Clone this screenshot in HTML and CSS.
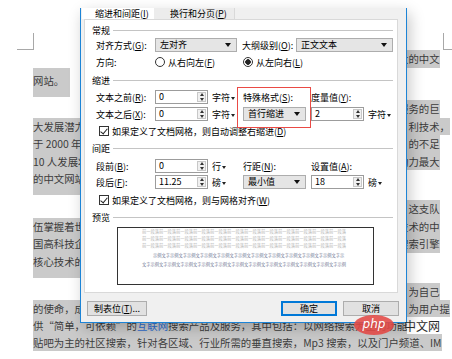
FILE: index.html
```html
<!DOCTYPE html>
<html lang="zh-CN">
<head>
    <meta charset="UTF-8">
    <meta name="viewport" content="width=device-width, initial-scale=1.0">
    <title>段落</title>
    <link rel="stylesheet" href="styles.css">
</head>
<body>
<div class="doc">
    <!-- page corner marks -->
    <div class="marks">
        <div class="mark-l"></div>
        <div class="mark-r"></div>
    </div>

    <!-- document text behind the dialog -->
    <div class="page">
        <div class="ln"><div class="l"></div><div class="r"><span class="hl">大的中文</span></div></div>
        <div class="ln ln-b"><div class="l"><span class="hl pad">网站。</span></div><div class="r"></div></div>
        <div class="gap3"></div>
        <div class="ln"><div class="l"></div><div class="r"><span class="hl">服务的巨</span></div></div>
        <div class="ln"><div class="l"><span class="hl">大发展潜力</span></div><div class="r"><span class="hl">　利技术，</span></div></div>
        <div class="ln"><div class="l"><span class="hl">于 2000 年1</span></div><div class="r"><span class="hl">　的不足</span></div></div>
        <div class="ln"><div class="l"><span class="hl">10 人发展壮</span></div><div class="r"><span class="hl">动力最大</span></div></div>
        <div class="ln ln-g"><div class="l"><span class="hl">的中文网站</span></div><div class="r"></div></div>
        <div class="gap5"></div>
        <div class="ln"><div class="l"></div><div class="r"><span class="hl">，这支队</span></div></div>
        <div class="ln"><div class="l"><span class="hl">伍掌握着世</span></div><div class="r"><span class="hl">技术的中</span></div></div>
        <div class="ln"><div class="l"><span class="hl">国高科技企</span></div><div class="r"><span class="hl">搜索引擎</span></div></div>
        <div class="ln ln-k"><div class="l"><span class="hl">核心技术的</span></div><div class="r"></div></div>
        <div class="gap5"></div>
        <div class="ln ln-s"><div class="l"></div><div class="r"><span class="hl">　为自己</span></div></div>
        <div class="ln ln-s"><div class="l"><span class="hl">的使命，成</span></div><div class="r"><span class="hl">　为用户提</span></div></div>
        <div class="ln ln-s"><div class="full"><span class="hl">供“简单，可依赖”的<span class="link">互联网</span>搜索产品及服务，其中包括：以网络搜索为主的功能</span></div></div>
        <div class="ln ln-s"><div class="full"><span class="hl">贴吧为主的社区搜索，针对各区域、行业所需的垂直搜索，Mp3 搜索，以及门户频道、IM</span></div></div>
    </div>

    <!-- paragraph dialog -->
    <div class="dialog">
        <div class="tabs">
            <div class="tab tab-active">缩进和间距(<u>I</u>)</div>
            <div class="tab tab-off">换行和分页(<u>P</u>)</div>
        </div>

        <div class="panel">
            <div class="group-title mt4">常规</div>
            <div class="row mt2">
                <span class="lbl">对齐方式(<u>G</u>):</span>
                <div class="combo combo-align">左对齐</div>
                <span class="lbl-outline">大纲级别(<u>O</u>):</span>
                <div class="combo combo-outline">正文文本</div>
            </div>
            <div class="row mt3">
                <span class="lbl">方向:</span>
                <div class="c2"><i class="radio"></i>从右向左(<u>F</u>)</div>
                <div class="c3"><i class="radio radio-on"></i>从左向右(<u>L</u>)</div>
            </div>

            <div class="group-title mt5">缩进</div>
            <div class="row mt4">
                <span class="lbl">文本之前(<u>R</u>):</span>
                <div class="c2"><div class="spin"><span class="val">0</span><span class="btns"></span></div><span class="unit">字符</span></div>
                <div class="c3">特殊格式(<u>S</u>):</div>
                <div class="c4">度量值(<u>Y</u>):</div>
            </div>
            <div class="row mt3">
                <span class="lbl">文本之后(<u>X</u>):</span>
                <div class="c2"><div class="spin"><span class="val">0</span><span class="btns"></span></div><span class="unit">字符</span></div>
                <div class="c3"><div class="combo combo-small">首行缩进</div></div>
                <div class="c4"><div class="spin"><span class="val">2</span><span class="btns"></span></div><span class="unit">字符</span></div>
            </div>
            <div class="check mt4"><i class="box"></i>如果定义了文档网格，则自动调整右缩进(<u>D</u>)</div>

            <div class="group-title mt5">间距</div>
            <div class="row mt5">
                <span class="lbl">段前(<u>B</u>):</span>
                <div class="c2"><div class="spin"><span class="val">0</span><span class="btns"></span></div><span class="unit">行</span></div>
                <div class="c3">行距(<u>N</u>):</div>
                <div class="c4">设置值(<u>A</u>):</div>
            </div>
            <div class="row mt2">
                <span class="lbl">段后(<u>F</u>):</span>
                <div class="c2"><div class="spin"><span class="val">11.25</span><span class="btns"></span></div><span class="unit">磅</span></div>
                <div class="c3"><div class="combo combo-small">最小值</div></div>
                <div class="c4"><div class="spin"><span class="val">18</span><span class="btns"></span></div><span class="unit">磅</span></div>
            </div>
            <div class="check mt5"><i class="box"></i>如果定义了文档网格，则与网格对齐(<u>W</u>)</div>

            <div class="group-title mt5">预览</div>
            <div class="preview">
                <div class="pv-prev">前一段落前一段落前一段落前一段落前一段落前一段落前一段落前一段落前一段落前一段落前一段落前一段落</div>
                <div class="pv-prev">前一段落前一段落前一段落前一段落前一段落前一段落前一段落前一段落前一段落前一段落前一段落前一段落</div>
                <div class="pv-prev">前一段落前一段落前一段落前一段落前一段落前一段落前一段落前一段落前一段落前一段落前一段落前一段落</div>
                <div class="pv-text pv-first">示例文字示例文字示例文字示例文字示例文字示例文字示例文字示例文字示例文字示例文字示例文字示</div>
                <div class="pv-text">文字示例文字示例文字示例文字示例文字示例文字示例文字示例文字示例文字示例文字示例文字示例文字示例</div>
            </div>
        </div>

        <div class="footer">
            <div class="btn btn-tabs">制表位(<u>T</u>)...</div>
            <div class="btn btn-ok">确定</div>
            <div class="btn btn-cancel">取消</div>
        </div>

        <!-- red annotation around the special indent -->
        <div class="note-box"></div>
    </div>

    <!-- site watermark -->
    <div class="watermark">
        <span class="wm-php">php</span>
        <span class="wm-cn">中文网</span>
    </div>
</div>
</body>
</html>
```

FILE: styles.css
```css
* {
    box-sizing: border-box;
}
body {
    margin: 0;
    width: 452px;
    height: 359px;
    overflow: hidden;
    background: #fff;
    font-family: "Noto Sans CJK SC", "Microsoft YaHei", sans-serif;
    color: #333;
}
u {
    text-decoration: underline;
    text-underline-offset: 1px;
}
.doc {
    position: relative;
    height: 359px;
    padding-top: 33px;
}

/* Page corner marks */
.marks {
    display: flex;
    justify-content: space-between;
    height: 17px;
}
.mark-l {
    width: 17px;
    margin-left: 17px;
    border-right: 1px solid #a8a8a8;
    border-bottom: 1px solid #a8a8a8;
}
.mark-r {
    width: 9px;
    border-left: 1px solid #a8a8a8;
    border-bottom: 1px solid #a8a8a8;
}

/* Document lines */
.page {
    padding-left: 33px;
    font-size: 10.4px;
    color: #3c3c3c;
}
.ln {
    display: flex;
    height: 17.5px;
    line-height: 17.5px;
    white-space: nowrap;
}
.ln .l {
    width: 365px;
}
.ln .r {
    width: 54px;
}
.hl {
    display: inline-block;
    height: 100%;
    background: #cacaca;
}
.hl.pad {
    padding-right: 6px;
}
.ln-b {
    height: 29.5px;
    line-height: 25px;
}
.ln-g {
    height: 25px;
}
.ln-k {
    height: 25.5px;
}
.ln-s {
    height: 17px;
    line-height: 17px;
}
.gap3 {
    height: 3px;
}
.gap5 {
    height: 5px;
}
.link {
    color: #2f6ccc;
}

/* Dialog */
.dialog {
    position: absolute;
    left: 80px;
    top: 8px;
    width: 327px;
    height: 315px;
    background: #f0f0f0;
    border: 1px solid #1d84d6;
    border-top: 0;
    box-shadow: 3px 5px 14px rgba(0, 0, 0, 0.22);
    font-size: 9px;
    color: #000;
}
.tabs {
    display: flex;
    height: 11px;
    line-height: 11px;
    margin-left: 1px;
    white-space: nowrap;
}
.tab-active {
    width: 72px;
    padding-left: 13px;
    background: #fff;
}
.tab-off {
    width: 81px;
    padding-left: 16px;
    background: #ececec;
    border-right: 1px solid #d9d9d9;
}
.panel {
    height: 274px;
    margin: 0 8px 0 3px;
    background: #fff;
    border: 1px solid #d9d9d9;
}
.mt2 { margin-top: 2px; }
.mt3 { margin-top: 3px; }
.mt4 { margin-top: 4px; }
.mt5 { margin-top: 5px; }

.group-title {
    display: flex;
    align-items: center;
    height: 12px;
    margin-left: 7px;
    margin-right: 4px;
    white-space: nowrap;
}
.group-title::after {
    content: "";
    flex: 1;
    margin-left: 3px;
    border-top: 1px solid #c4c4c4;
}
.row {
    display: flex;
    align-items: center;
    height: 14px;
    margin-left: 11px;
    white-space: nowrap;
}
.lbl {
    width: 59px;
}
.lbl-outline {
    width: 54px;
    margin-left: 5px;
}
.c2 {
    display: flex;
    align-items: center;
    width: 88px;
}
.c3 {
    display: flex;
    align-items: center;
    width: 68px;
}
.c4 {
    display: flex;
    align-items: center;
}

/* Drop-down */
.combo {
    position: relative;
    height: 14px;
    line-height: 12px;
    padding-left: 4px;
    background: #e5e5e5;
    border: 1px solid #adadad;
}
.combo::after {
    content: "";
    position: absolute;
    right: 5px;
    top: 4px;
    border-left: 3.5px solid transparent;
    border-right: 3.5px solid transparent;
    border-top: 4px solid #111;
}
.combo-align { width: 82px; }
.combo-outline { width: 97px; }
.combo-small { width: 63px; }

/* Spin box */
.spin {
    display: flex;
    width: 53px;
    height: 14px;
    background: #fff;
    border: 1px solid #9c9c9c;
}
.spin .val {
    flex: 1;
    padding-left: 3px;
    line-height: 12px;
}
.spin .btns {
    display: flex;
    flex-direction: column;
    align-items: center;
    justify-content: center;
    gap: 2px;
    width: 9px;
    margin: 1px;
    background: #f0f0f0;
    border: 1px solid #c8c8c8;
}
.spin .btns::before {
    content: "";
    border-left: 2.5px solid transparent;
    border-right: 2.5px solid transparent;
    border-bottom: 3px solid #333;
}
.spin .btns::after {
    content: "";
    border-left: 2.5px solid transparent;
    border-right: 2.5px solid transparent;
    border-top: 3px solid #333;
}
.unit {
    margin-left: 4px;
}
.unit::after {
    content: "";
    display: inline-block;
    margin-left: 1px;
    vertical-align: middle;
    border-left: 2.5px solid transparent;
    border-right: 2.5px solid transparent;
    border-top: 3px solid #222;
}

/* Radio and check */
.radio {
    width: 10px;
    height: 10px;
    margin-right: 3px;
    border: 1px solid #333;
    border-radius: 50%;
    background: #fff;
}
.radio-on {
    background: radial-gradient(circle, #222 0 2.5px, #fff 3px);
}
.check {
    display: flex;
    align-items: center;
    height: 12px;
    margin-left: 14px;
    white-space: nowrap;
}
.box {
    position: relative;
    width: 10px;
    height: 10px;
    margin-right: 3px;
    border: 1px solid #333;
    background: #fff;
}
.box::after {
    content: "";
    position: absolute;
    left: 2px;
    top: 0;
    width: 3px;
    height: 6px;
    border-right: 1px solid #222;
    border-bottom: 1px solid #222;
    transform: rotate(40deg);
}

/* Preview */
.preview {
    width: 257px;
    height: 58px;
    margin: 4px 0 0 32px;
    padding-left: 24px;
    background: #fff;
    border: 1px solid #333;
    font-size: 4.25px;
    white-space: nowrap;
    overflow: hidden;
}
.pv-prev {
    line-height: 7px;
    color: #b4b4b4;
}
.pv-text {
    line-height: 9px;
    color: #6f7794;
}
.pv-first {
    margin-top: 1.5px;
    text-indent: 11px;
}

/* Buttons */
.footer {
    display: flex;
    height: 15px;
    margin: 8px 7px 0 6px;
}
.btn {
    height: 15px;
    line-height: 13px;
    text-align: center;
    background: #e1e1e1;
    border: 1px solid #adadad;
    white-space: nowrap;
}
.btn-tabs {
    width: 60px;
}
.btn-ok {
    width: 56px;
    margin-left: auto;
    border-color: #0078d7;
    box-shadow: inset 0 0 0 1px #0078d7;
}
.btn-cancel {
    width: 56px;
    margin-left: 6px;
}
.note-box {
    position: absolute;
    left: 156px;
    top: 79px;
    width: 74px;
    height: 41px;
    border: 1px solid #ea4a45;
}

/* Watermark */
.watermark {
    position: absolute;
    left: 354px;
    top: 315px;
    display: flex;
    align-items: center;
}
.wm-php {
    width: 40px;
    height: 20px;
    line-height: 19px;
    border-radius: 50%;
    background: rgba(226, 72, 68, 0.88);
    color: #fff;
    font-family: "DejaVu Sans", sans-serif;
    font-size: 12px;
    font-style: italic;
    text-align: center;
}
.wm-cn {
    margin-left: 10px;
    font-size: 12px;
    color: #2a2a2a;
}
```
